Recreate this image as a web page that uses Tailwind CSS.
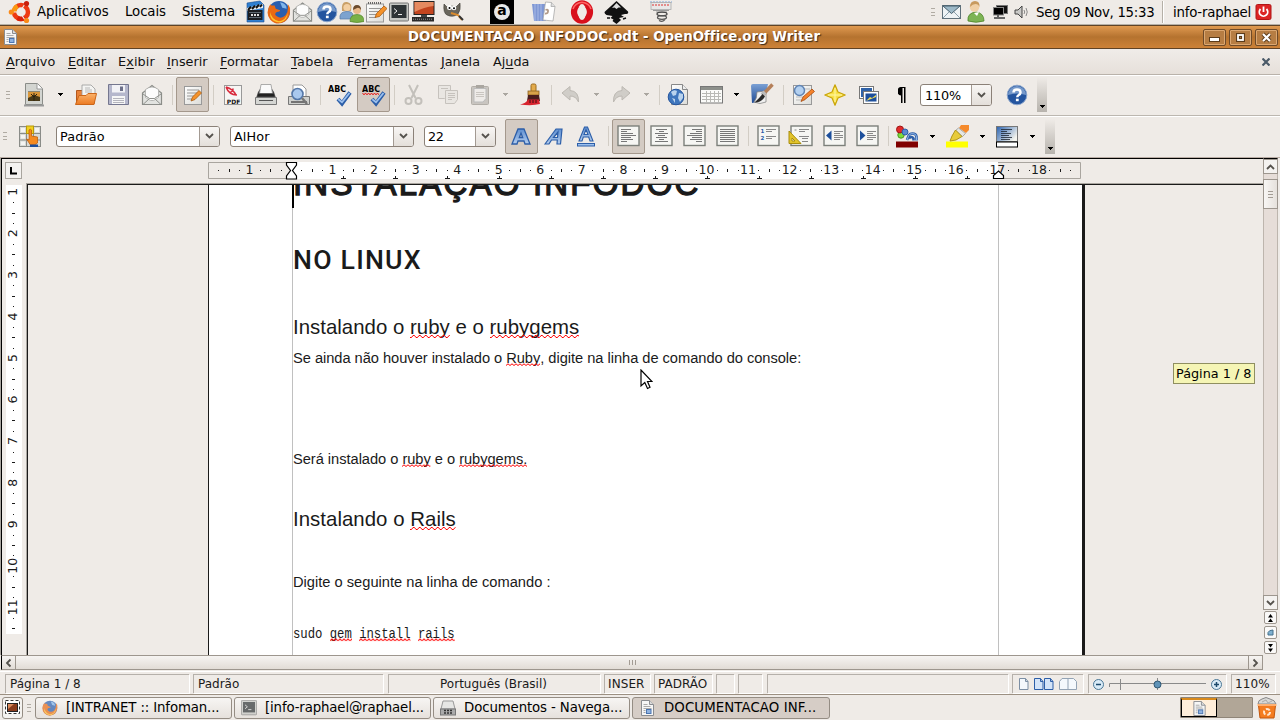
<!DOCTYPE html>
<html lang="pt-BR">
<head>
<meta charset="utf-8">
<title>DOCUMENTACAO INFODOC.odt - OpenOffice.org Writer</title>
<script src="https://cdn.jsdelivr.net/npm/@tailwindcss/browser@4"></script>
</head>
<body class="w-[1280px] h-[720px] overflow-hidden bg-[#efebe7] text-[#1a1a1a] font-['DejaVu_Sans',sans-serif] text-[13px]">

<!-- shared symbols -->
<svg width="0" height="0" class="absolute">
  <defs>
    <pattern id="wave" width="6" height="3" patternUnits="userSpaceOnUse"><path d="M0 2.5H1.5L3 .5H4.5L6 2.5" fill="none" stroke="#f00" stroke-width="1"/></pattern>
    <pattern id="wave2" width="4" height="3" patternUnits="userSpaceOnUse"><path d="M0 2.5L2 .8L4 2.5" fill="none" stroke="#f00" stroke-width="1"/></pattern>
    <linearGradient id="blue" x1="0" y1="0" x2="0" y2="1"><stop offset="0" stop-color="#7aa0d4"/><stop offset="1" stop-color="#1f4a94"/></linearGradient>
    <linearGradient id="paper" x1="0" y1="0" x2="1" y2="1"><stop offset="0" stop-color="#fff"/><stop offset="1" stop-color="#dcdcd8"/></linearGradient>
    <linearGradient id="lb" x1="0" y1="0" x2="0" y2="1"><stop offset="0" stop-color="#5f8fd0"/><stop offset="1" stop-color="#b4cdee"/></linearGradient>
    <linearGradient id="bgfade" x1="0" y1="0" x2="1" y2=".6"><stop offset="0" stop-color="#2a62b0"/><stop offset="1" stop-color="#f4f4ee"/></linearGradient>
    <linearGradient id="fold" x1="0" y1="0" x2="0" y2="1"><stop offset="0" stop-color="#fbb36b"/><stop offset="1" stop-color="#ec7a22"/></linearGradient>
    <symbol id="i-down" viewBox="0 0 5 3"><path d="M0 0H5V1H4V2H3V3H2V2H1V1H0Z" fill="currentColor"/></symbol>
    <symbol id="i-chev" viewBox="0 0 9 6"><path d="M1 1L4.500 4.500L8 1" fill="none" stroke="#55524d" stroke-width="1.800"/></symbol>
    <symbol id="i-mail" viewBox="0 0 22 22"><path d="M1.500 9L11 1.500L20.500 9V20.500H1.500Z" fill="#e2e3e0" stroke="#8b8d89" stroke-width="1.200"/><path d="M4.500 5.500Q11 .5 17.500 5.500v8l-5 3h-3l-5-3z" fill="#fcfcfc" stroke="#a9aaa7" stroke-width=".8"/><path d="M2 20.500L8.500 14.500h5L20 20.500M2 10l6.500 4.500M20 10l-6.500 4.500" fill="none" stroke="#8f918d"/></symbol>
    <symbol id="i-help" viewBox="0 0 22 22"><circle cx="11" cy="11" r="9.800" fill="#24559f" stroke="#8aa5cc"/><path d="M2 11a9 9 0 0 1 18 0Q11 8 2 11" fill="#7699ca"/><path d="M7.500 8.500Q7.500 5.500 11 5.500T14.500 8.500Q14.500 10 12.700 11 11.300 11.800 11.300 13.300" fill="none" stroke="#fff" stroke-width="2.500"/><rect x="9.900" y="14.700" width="2.800" height="2.500" fill="#fff"/></symbol>
    <symbol id="i-note" viewBox="0 0 22 22"><rect x="1.500" y="2.500" width="17" height="18" fill="url(#paper)" stroke="#999"/><path d="M4 7h12M4 10h11M4 13h8M4 16h7" stroke="#999"/><path d="M3 1.500h14" stroke="#666" stroke-width="2" stroke-dasharray="1 1"/><path d="M10 16l1.500-4L19 4.500l3 2.500-7.500 8z" fill="#f5922a" stroke="#a85a10" stroke-width=".8"/></symbol>
    <symbol id="i-term" viewBox="0 0 20 20"><rect x=".5" y=".5" width="19" height="18" rx="1" fill="#c6c8c4" stroke="#777"/><rect x="2.500" y="2.500" width="15" height="13" fill="#2e3436"/><path d="M5 6l3 2.500L5 11M9 12h4" fill="none" stroke="#eee"/></symbol>
    <symbol id="i-odt" viewBox="0 0 13 16"><path d="M.5.500H8.500L12.500 4.500V15.500H.5Z" fill="#f6f6f6" stroke="#8a8c90"/><path d="M8.500.500V4.500H12.500" fill="#ddd" stroke="#8a8c90"/><path d="M2.500 4.500h4M2.500 6.500h7M2.500 8.500h8M2.500 10.500h2M2.500 12.500h2" stroke="#aaa"/><rect x="5.500" y="9.500" width="4.500" height="4" fill="#8fb2e0" stroke="#4a74b0"/></symbol>
    <symbol id="i-fox" viewBox="0 0 22 22"><circle cx="11" cy="11" r="10" fill="#2a5eae"/><path d="M12 2q6 1 6 6l-4-1z" fill="#7fb4ea"/><path d="M3 4Q-2 12 3 18Q9 24 16 20Q22 16 21 7Q20 5 19 4Q20 10 17 14Q13 18 9 15Q6 13 9 11Q12 11 12 9.500L8 8L7 5L4 5Z" fill="#ea6a14"/><path d="M3 11Q4 18 11 19.500Q17 19 19 12Q19 18 13 20.500Q5 21 3 15Z" fill="#ffc52e"/></symbol>
    <symbol id="i-fmt" viewBox="0 0 23 22"><rect x="1" y="1" width="21" height="19.500" fill="#f6f6f3" stroke="#7d807b" stroke-width="1.400"/></symbol>
  </defs>
</svg>

<!-- desktop panel -->
<header class="flex items-center h-[25px] bg-[#efebe7] border-b border-[#b5b0a7] text-[13.33px] text-black *:shrink-0">
  <svg class="ml-2 w-6 h-6" viewBox="0 0 24 24"><circle cx="13" cy="12" r="7" fill="none" stroke="#ee3a12" stroke-width="4.500"/><path d="M6 12A7 7 0 0 1 9.500 6" fill="none" stroke="#fa9a10" stroke-width="4.500"/><path d="M9.500 18A7 7 0 0 0 17 17.500" fill="none" stroke="#d8210a" stroke-width="4.500"/><path d="M4 12h5M17 4l-3 4.500M17 20l-3-4.500" stroke="#efebe7" stroke-width="1.200"/><circle cx="3.300" cy="12" r="2.600" fill="#fa8a18"/><circle cx="18.500" cy="3.500" r="2.600" fill="#c9200c"/><circle cx="18.500" cy="20.500" r="2.600" fill="#f98b18"/></svg>
  <span class="ml-[5px] w-[88px] h-5 leading-5 -mt-px tracking-[-0.08px]">Aplicativos</span>
  <span class="w-[57px] h-5 leading-5 -mt-px tracking-[-0.1px]">Locais</span>
  <span class="w-[64px] h-5 leading-5 -mt-px tracking-[-0.1px]">Sistema</span>
  <svg class="w-5 h-6" viewBox="0 0 20 24"><path d="M1 3L14 1L18 5V22H1Z" fill="#2f7fd0" stroke="#1d4f90" stroke-width=".6"/><path d="M1 8L17 4V8L1 11Z" fill="#eee"/><path d="M2 10l3-3.200M6 9l3-3.200M10 8l3-3.200M14 7l2-2.500" stroke="#111" stroke-width="2"/><rect x="1.500" y="10" width="15" height="10" fill="#1b1d22"/><path d="M3 12.500h12M3 17.500h12" stroke="#5d6770"/><path d="M5 15h8" stroke="#ddd" stroke-width="2" stroke-dasharray="2 1"/></svg>
  <svg class="ml-[1px] w-6 h-6"><use href="#i-fox"/></svg>
  <svg class="ml-[1px] w-[21px] h-[22px]"><use href="#i-mail"/></svg>
  <svg class="ml-[3px] w-[22px] h-[22px]"><use href="#i-help"/></svg>
  <svg class="ml-[1px] w-[25px] h-6" viewBox="0 0 25 24"><path d="M1 19q-1-7 6-7.500t7 4V19z" fill="#7da3cf" stroke="#5679a3" stroke-width=".7"/><path d="M3 11Q2 1 8 2Q14 3 12 11Z" fill="#c9a068"/><circle cx="8" cy="7.500" r="3.600" fill="#f3cfa2"/><circle cx="18" cy="10" r="4" fill="#e8b98a"/><path d="M14 10q0-5 4-5t4 5q-2-3-4-2t-4 2" fill="#6b4a2c"/><path d="M11 21.500q0-7 7-7t7 7q-7 2-14 0" fill="#79b147" stroke="#4e8424" stroke-width=".7"/></svg>
  <svg class="ml-[1px] w-[22px] h-[23px]"><use href="#i-note"/></svg>
  <svg class="ml-[2px] w-5 h-[21px]"><use href="#i-term"/></svg>
  <svg class="ml-[2px] w-6 h-6" viewBox="0 0 24 24"><rect x="3" y="1.500" width="20" height="13" fill="#c4451f" stroke="#222"/><path d="M3.500 2h19v4q-9 1-19 6z" fill="#e58a60"/><rect x="10" y="15" width="6" height="2" fill="#444"/><rect x="1" y="17" width="22" height="4.500" fill="#2a2a2a"/><path d="M2 19.200h20" stroke="#999" stroke-dasharray="1 1"/></svg>
  <svg class="ml-[7px] w-[22px] h-[22px]" viewBox="0 0 22 22"><path d="M2 3l3 3q5-2 9 0l4-4q1 7-2 11-5 4-11 1-4-2-3-11" fill="#6a665c" stroke="#3b3933" stroke-width=".6"/><circle cx="7.500" cy="6.500" r="2.500" fill="#fff"/><circle cx="12" cy="7" r="2.300" fill="#fff"/><circle cx="7.500" cy="7" r="1"/><circle cx="12" cy="7.300" r="1"/><path d="M9 12l7 2 4 5" fill="none" stroke="#d98a2c" stroke-width="2"/><path d="M17 15l4 4" stroke="#333" stroke-width="2"/></svg>
  <div class="ml-[26px] size-6 bg-black grid place-items-center"><div class="size-4 rounded-full bg-[#e8e8e8] text-black font-bold text-[14px] leading-[12px] text-center">a</div></div>
  <svg class="ml-[18px] w-6 h-[22px]" viewBox="0 0 24 22"><path d="M0 3h14v17H2z" fill="#7f97d4"/><path d="M3 3v17M6 3v17M9 3v17" stroke="#a9bae6"/><path d="M13.500 1l6 .5 3.500 4-2 14.500-10-1z" fill="#fff" stroke="#aaa" stroke-width=".8"/><path d="M19.500 1.500l-.5 4 4 0" fill="#ddd" stroke="#aaa" stroke-width=".8"/><path d="M13.500 9q3-1 2.500 1.500t-3 2" fill="none" stroke="#b29a88" stroke-width="1.800"/></svg>
  <svg class="ml-[14px] w-[24px] h-[24px]" viewBox="0 0 24 24"><ellipse cx="12" cy="12" rx="8" ry="8.700" fill="none" stroke="#d8101c" stroke-width="6.200"/><path d="M3 9q2-6 9-6.800 7 .8 9 6.800" fill="none" stroke="#ff6464" stroke-width="1.500"/><ellipse cx="12" cy="12" rx="4" ry="8" fill="#efebe7"/></svg>
  <svg class="ml-[10px] w-[25px] h-[23px]" viewBox="0 0 25 23"><path d="M12.500 0L24 10.500Q25 13 21 13L17 14l3 2-5 1 2 2-4.500 4-4-3 1-1.500-3-1.500 2-2-6-1Q-.5 12 1 10.500Z" fill="#111"/><path d="M12.500 2l4.500 4.500-2.500 0-2 1.500-2-1.500-2.500.5z" fill="#ddd"/><path d="M3 17l3 0M19 18l3-1" stroke="#111" stroke-width="1.500"/></svg>
  <svg class="ml-[20px] w-[24px] h-[24px]" viewBox="0 0 24 24"><path d="M1 2h22" stroke="#7aa7e0" stroke-dasharray="2 1"/><rect x="2" y="2.500" width="20" height="7" fill="#e8e8e8" stroke="#aaa" stroke-width=".8"/><path d="M3 5h18" stroke="#d33" stroke-dasharray="2 1"/><path d="M4 10.500h16M7 12h11" stroke="#999"/><ellipse cx="13" cy="14" rx="5" ry="1.800" fill="none" stroke="#444" stroke-width="1.300"/><ellipse cx="13" cy="17.500" rx="4.500" ry="1.800" fill="none" stroke="#555" stroke-width="1.300"/><path d="M10 20.500q4 2 6-1" fill="none" stroke="#555" stroke-width="1.300"/></svg>
  <div class="ml-[258px] w-1 h-2 border-y border-[#b0aba3] grid place-items-center"><i class="block w-1 h-px bg-[#b0aba3]"></i></div>
  <svg class="ml-[7px] w-[19px] h-[14px]" viewBox="0 0 19 14"><rect x=".5" y=".5" width="18" height="13" fill="#eef3f5" stroke="#5f707a"/><path d="M1 1H18L9.500 8.500Z" fill="#9db9c8" stroke="#48606e"/><path d="M1 13L7 7M18 13L12 7" stroke="#8ba0ac"/></svg>
  <svg class="ml-[6px] w-[18px] h-[22px]" viewBox="0 0 18 22"><path d="M1 20q-1-8 8-9 8 1 8 9-8 2.500-16 0" fill="#7db455" stroke="#4d8429" stroke-width=".8"/><circle cx="7.500" cy="6" r="4.800" fill="#f0d0a6"/><path d="M3 6q0-6 5-6t4.500 6q-1-3-4-3T3 6" fill="#c79a5e"/><path d="M7 12l3 3 2-4" fill="#fff"/></svg>
  <svg class="ml-[8px] w-[15px] h-4" viewBox="0 0 15 16"><rect x="3.500" y="1.500" width="11" height="8" fill="#111" stroke="#777"/><rect x=".5" y="3.500" width="10" height="7.500" fill="#000" stroke="#888"/><path d="M5 11v2M1 14h11" stroke="#666" stroke-width="2"/></svg>
  <svg class="ml-[6px] w-[14px] h-[14px]" viewBox="0 0 14 14"><path d="M1 5h3l4-4v12L4 9H1z" fill="#c9c9c7" stroke="#444"/><path d="M10 5q1.500 2 0 4M12 3q2.500 4 0 8" fill="none" stroke="#888"/></svg>
  <span class="ml-[8px] w-[126px] pt-px tracking-[-0.3px]">Seg 09 Nov, 15:33</span>
  <i class="w-[2px] h-[22px] border-l border-[#b5b0a7] bg-white"></i>
  <span class="ml-[9px] w-[82px] pt-px tracking-[-0.22px]">info-raphael</span>
  <svg class="w-[17px] h-4" viewBox="0 0 17 16"><rect x="1" y=".5" width="15" height="15" rx="1.500" fill="#dc2424" stroke="#b01515"/><path d="M5.500 5a4.200 4.200 0 1 0 6 0" fill="none" stroke="#fff" stroke-width="1.800"/><path d="M8.500 2.500v5.500" stroke="#fff" stroke-width="1.800"/></svg>
</header>

<!-- title bar -->
<div class="flex items-center h-6 border-t border-b border-[#5f4326] bg-linear-to-b from-[#e09a50] via-[#b5732f] to-[#cd8238] *:shrink-0">
  <svg class="ml-1 w-[13px] h-4"><use href="#i-odt"/></svg>
  <h1 class="ml-[391px] w-[412px] h-5 leading-5 font-bold text-[13.33px] tracking-[0.02px] text-white whitespace-nowrap [text-shadow:1px_1px_1px_#3a2a1a]">DOCUMENTACAO INFODOC.odt - OpenOffice.org Writer</h1>
  <div class="ml-[383px] flex gap-[3px]">
    <div class="w-[23px] h-[17px] rounded-[2px] border border-[#6e4a28] bg-[#b67d43] shadow-[inset_0_0_0_1px_#dba771] grid place-items-center"><svg width="11" height="5" class="mt-1"><rect x=".5" y=".5" width="10" height="4" fill="#fff" stroke="#5c3c1a"/></svg></div>
    <div class="w-[23px] h-[17px] rounded-[2px] border border-[#6e4a28] bg-[#b67d43] shadow-[inset_0_0_0_1px_#dba771] grid place-items-center"><svg width="9" height="9"><rect x="2" y="2" width="5" height="5" fill="none" stroke="#5c3c1a" stroke-width="4"/><rect x="2" y="2" width="5" height="5" fill="none" stroke="#fff" stroke-width="1.800"/></svg></div>
    <div class="w-[23px] h-[17px] rounded-[2px] border border-[#6e4a28] bg-[#b67d43] shadow-[inset_0_0_0_1px_#dba771] grid place-items-center"><svg width="11" height="11"><path d="M2 2l7 7M9 2l-7 7" stroke="#5c3c1a" stroke-width="4"/><path d="M2 2l7 7M9 2l-7 7" stroke="#fff" stroke-width="2.200"/></svg></div>
  </div>
</div>

<!-- menu bar -->
<nav class="flex items-center h-[26px] bg-linear-to-b from-[#f0ece9] to-[#e6e0da] border-b border-[#b9b2aa] text-[12.8px] text-[#111] [&_u]:underline-offset-2 *:shrink-0">
  <span class="ml-[6px] w-[62px] tracking-[0.05px]"><u>A</u>rquivo</span>
  <span class="w-[50px]"><u>E</u>ditar</span>
  <span class="w-[49px] tracking-[0.1px]">E<u>x</u>ibir</span>
  <span class="w-[53px]"><u>I</u>nserir</span>
  <span class="w-[71px] tracking-[0.05px]"><u>F</u>ormatar</span>
  <span class="w-[56px] tracking-[0.3px]"><u>T</u>abela</span>
  <span class="w-[94px]">Fe<u>r</u>ramentas</span>
  <span class="w-[52px]"><u>J</u>anela</span>
  <span class="w-[38px]">Aj<u>u</u>da</span>
  <svg class="ml-[731px] w-2 h-2" viewBox="0 0 8 8"><path d="M.5.500L7.500 7.500M7.500.500L.5 7.500" stroke="#4b5a68" stroke-width="2.200"/></svg>
</nav>

<!-- standard toolbar -->
<div class="flex items-center h-[41px] pb-[2px] border-t border-t-white border-b border-b-[#bcb7b0] text-black *:shrink-0">
  <div class="ml-[6px] mr-2 w-1 h-2 border-y border-[#b0aba3] grid place-items-center"><i class="block w-1 h-px bg-[#b0aba3]"></i></div>
  <div class="w-[33px] pr-px grid place-items-center"><svg class="w-[22px] h-6" viewBox="0 0 22 24"><path d="M2.500.500H14.500L19.500 5.500V21.500H2.500Z" fill="#d3d5d1" stroke="#8a8c88"/><path d="M14 .500V6H19.500" fill="#fff" stroke="#999"/><rect x="5" y="8.500" width="12" height="9.500" fill="#4a3a18"/><path d="M5 9h12v5l-6-2-6 3z" fill="#d9963a"/><path d="M11 10v8M8 11l3 3 3-3" stroke="#2a2210" fill="none"/><path d="M1 22.500h20" stroke="#999" stroke-width="2"/></svg></div>
  <div class="w-[18px] grid place-items-center"><svg class="w-[5px] h-[3px]"><use href="#i-down"/></svg></div>
  <div class="w-[33px] grid place-items-center"><svg class="w-6 h-[22px]" viewBox="0 0 24 22"><path d="M2.500 20V6.500H9L11 8.500H20V20Z" fill="#e8823a" stroke="#b4581c"/><path d="M8 1h9l4 4v7H8z" fill="#f4f4f2" stroke="#999" stroke-width=".8"/><path d="M11 4h5M11 6h7M11 8h7" stroke="#aaa" stroke-width=".8"/><path d="M1.500 20.500L5 11.500H12L14 9.500H22.500L20 20.500Z" fill="url(#fold)" stroke="#cc6619"/></svg></div>
  <div class="w-[33px] grid place-items-center"><svg class="w-[23px] h-[23px]" viewBox="0 0 23 23"><path d="M1.500 1.500H21.500V21.500H1.500Z" fill="#b5b7cc" stroke="#75778f"/><rect x="5" y="2" width="13" height="7.500" fill="#f2f2f6"/><rect x="13" y="3.500" width="3" height="4.500" fill="#6d7089"/><rect x="5" y="13" width="13" height="8" fill="#f6f6f6"/><path d="M6 15.500h11M6 17.500h11M6 19.500h11" stroke="#b5b5bd"/></svg></div>
  <div class="w-[33px] grid place-items-center"><svg class="w-[22px] h-[22px]"><use href="#i-mail"/></svg></div>
  <div class="w-2 grid place-items-center"><i class="block w-px h-5 bg-[#d2cdc5]"></i></div>
  <div class="w-[33px] h-[35px] rounded-[2px] border border-[#a4988c] bg-[#d4cbc3] grid place-items-center"><svg class="w-[22px] h-[22px]" viewBox="0 0 22 22"><rect x="2.500" y="2.500" width="17" height="18" fill="url(#paper)" stroke="#999"/><path d="M5 6h12M5 9h10M5 12h7M5 15h5" stroke="#999"/><path d="M9 17l1.500-4L17 6.500l2.500 2.500-6.500 6.500z" fill="#f5922a" stroke="#a85a10" stroke-width=".8"/></svg></div>
  <div class="w-2 grid place-items-center"><i class="block w-px h-5 bg-[#d2cdc5]"></i></div>
  <div class="w-[33px] pr-px grid place-items-center"><svg class="w-5 h-[22px]" viewBox="0 0 20 22"><rect x="1.500" y="1.500" width="17" height="19" fill="#f6f6f4" stroke="#999"/><path d="M3 3q3 8 11 8M3 3q7 2 10 8M10 4.500q0 3-3 4" fill="none" stroke="#d92a3c" stroke-width="1.600"/><text x="10.500" y="19.500" font-size="6" font-weight="bold" text-anchor="middle" fill="#111">PDF</text></svg></div>
  <div class="w-[33px] pr-px grid place-items-center"><svg class="w-[22px] h-[22px]" viewBox="0 0 22 22"><path d="M3 8l2-3h12l2 3 2 6H1z" fill="#4a4a4a"/><path d="M6 .5h10l1.500 9H4.500z" fill="#fafafa" stroke="#999" stroke-width=".8"/><path d="M3.500 9.500h15l1 3h-17z" fill="#222"/><path d="M.5 13.500H21.500V20.500H.5Z" fill="#d5d6d3" stroke="#777"/><path d="M4 16.500h14" stroke="#555"/></svg></div>
  <div class="w-[33px] pr-px grid place-items-center"><svg class="w-[22px] h-[22px]" viewBox="0 0 22 22"><path d="M5 1h9l4 4v8H5z" fill="#fff" stroke="#999"/><path d="M.5 12.500H21.500V20.500H.5Z" fill="#cfd0cd" stroke="#777"/><path d="M3 18h16" stroke="#555" stroke-width="1.500"/><circle cx="9.500" cy="10" r="5.500" fill="#a9c8ee" stroke="#5477a8" stroke-width="1.600"/><path d="M14 14l5 6" stroke="#777" stroke-width="2.500"/></svg></div>
  <div class="w-2 grid place-items-center"><i class="block w-px h-5 bg-[#d2cdc5]"></i></div>
  <div class="w-[33px] pr-px grid place-items-center"><svg class="w-6 h-6" viewBox="0 0 24 24"><text x="0" y="8.500" font-size="8" font-weight="bold" textLength="18" lengthAdjust="spacingAndGlyphs">ABC</text><path d="M10 16l4 4.500L22 9.500" fill="none" stroke="#2c5ea8" stroke-width="4"/><path d="M10.300 16.300l3.700 3L21.500 10" fill="none" stroke="#9cc0ee" stroke-width="1.800"/></svg></div>
  <div class="w-[33px] h-[35px] rounded-[2px] border border-[#a4988c] bg-[#d4cbc3] grid place-items-center"><svg class="w-6 h-6" viewBox="0 0 24 24"><text x="0" y="8.500" font-size="8" font-weight="bold" textLength="18" lengthAdjust="spacingAndGlyphs">ABC</text><path d="M.5 10.500l1.500 1 1.500-1 1.500 1 1.500-1 1.500 1 1.500-1 1.500 1 1.500-1 1.500 1 1.500-1 1.500 1" fill="none" stroke="#e00" stroke-width="1"/><path d="M10 16l4 4.500L22 9.500" fill="none" stroke="#2c5ea8" stroke-width="4"/><path d="M10.300 16.300l3.700 3L21.500 10" fill="none" stroke="#9cc0ee" stroke-width="1.800"/></svg></div>
  <div class="w-2 grid place-items-center"><i class="block w-px h-5 bg-[#d2cdc5]"></i></div>
  <div class="w-[33px] pr-px grid place-items-center"><svg class="w-5 h-[22px]" viewBox="0 0 20 22" stroke="#c3c0bb" fill="none"><path d="M5 1l6.500 13M14 1L7.500 14" stroke-width="2"/><circle cx="4.500" cy="17" r="3" stroke-width="2"/><circle cx="14.500" cy="17" r="3" stroke-width="2"/></svg></div>
  <div class="w-[33px] grid place-items-center"><svg class="w-[22px] h-[21px]" viewBox="0 0 22 21" fill="#e9e6e2" stroke="#c6c2bd"><path d="M1.500 1.500h12v11h-4l-2 2h-6z"/><path d="M8.500 6.500h12v9l-3 4h-9z"/><path d="M4 4.500h7M11 9.500h7M11 11.500h7M11 13.500h7M11 15.500h4"/></svg></div>
  <div class="w-[33px] pr-px grid place-items-center"><svg class="w-5 h-[22px]" viewBox="0 0 20 22"><rect x="1.500" y="2.500" width="17" height="18" rx="1" fill="#c9c5c0" stroke="#b2aea8"/><path d="M4 4.500h12v10l-3 3.500H4z" fill="#eeebe8" stroke="#bbb"/><path d="M6 8.500h8M6 10.500h8M6 12.500h8" stroke="#c9c5c0"/><rect x="6" y="1" width="8" height="3" fill="#aaa6a0"/></svg></div>
  <div class="w-[17px] pr-px grid place-items-center text-[#aaa6a0]"><svg class="w-[5px] h-[3px]"><use href="#i-down"/></svg></div>
  <div class="w-[33px] pr-px grid place-items-center"><svg class="w-[22px] h-[23px]" viewBox="0 0 22 23"><rect x="12" y="1" width="5" height="8" rx="1.500" fill="#e3ab4b" stroke="#9a6a1c"/><rect x="9" y="8" width="11" height="4" fill="#d7a24a" stroke="#8a6020" stroke-width=".8"/><path d="M9 12h11l1 6H8z" fill="#4a1d1d"/><path d="M1 21.500q6-1 8-5l11 0 1 4.500q-8 2-20 .5" fill="#d8232e"/><path d="M11 17v3M14 17v3M17 17v3" stroke="#3a1010"/></svg></div>
  <div class="w-2 grid place-items-center"><i class="block w-px h-5 bg-[#d2cdc5]"></i></div>
  <div class="w-[33px] pr-px grid place-items-center"><svg class="w-5 h-5" viewBox="0 0 20 20"><path d="M1 8l8-6.500V5.500Q18 6 17.500 17Q15 11 9 11v4z" fill="#d0cdc8" stroke="#bcb8b2"/></svg></div>
  <div class="w-[17px] pr-px grid place-items-center text-[#aaa6a0]"><svg class="w-[5px] h-[3px]"><use href="#i-down"/></svg></div>
  <div class="w-[33px] pr-px grid place-items-center"><svg class="w-5 h-5" viewBox="0 0 20 20"><path d="M19 8l-8-6.500V5.500Q2 6 2.500 17Q5 11 11 11v4z" fill="#d0cdc8" stroke="#bcb8b2"/></svg></div>
  <div class="w-[17px] pr-px grid place-items-center text-[#aaa6a0]"><svg class="w-[5px] h-[3px]"><use href="#i-down"/></svg></div>
  <div class="w-2 grid place-items-center"><i class="block w-px h-5 bg-[#d2cdc5]"></i></div>
  <div class="w-[33px] pr-[3px] grid place-items-center"><svg class="w-[22px] h-[23px]" viewBox="0 0 22 23"><path d="M4.500 1.500H15.500L20.500 6.500V21.500H4.500Z" fill="url(#paper)" stroke="#888"/><path d="M15.500 1.500V6.500H20.500" fill="#eee" stroke="#888"/><circle cx="9" cy="14" r="7.800" fill="#3f76bd" stroke="#24559f"/><path d="M4 9q3-3 6-1l-1 4-3 1zM12 10l4 1v4l-3 4-2-4zM5 15l3 1v4z" fill="#b9d3ee"/></svg></div>
  <div class="w-[33px] pr-[3px] grid place-items-center"><svg class="w-[23px] h-[18px]" viewBox="0 0 23 18"><rect x=".5" y=".5" width="22" height="16.500" fill="#fbfbf9" stroke="#777"/><rect x="1" y="1" width="21" height="3" fill="#8d908b"/><path d="M2 7.500h19M2 10.500h19M2 13.500h19M6.500 5v11M10.500 5v11M14.500 5v11M18.500 5v11" stroke="#b9b9b5"/></svg></div>
  <div class="w-[17px] pr-[3px] grid place-items-center"><svg class="w-[5px] h-[3px]"><use href="#i-down"/></svg></div>
  <div class="w-[33px] pr-px grid place-items-center"><svg class="w-6 h-[23px]" viewBox="0 0 24 23"><path d="M1 3Q1 1 3 1H18L15 17L2 20Z" fill="url(#blue)"/><path d="M4 19Q7 16 7 9L16 8V19Q10 22 4 19" fill="#f0f0f0" stroke="#888" stroke-width=".8"/><path d="M22.500 1.500l-9.500 10" stroke="#b5805a" stroke-width="3.500"/><path d="M15 9l-3 3" stroke="#bbb" stroke-width="4"/><path d="M12.500 11q-3 4-8 8.500 7 0 10.500-6z" fill="#2a2a2a"/></svg></div>
  <div class="w-2 grid place-items-center"><i class="block w-px h-5 bg-[#d2cdc5]"></i></div>
  <div class="w-[33px] grid place-items-center"><svg class="w-[23px] h-[22px]" viewBox="0 0 23 22"><rect x="1.500" y="1.500" width="18" height="19" fill="url(#paper)" stroke="#999"/><path d="M4 13h9M4 16h9M13 5h5" stroke="#bbb"/><circle cx="7.500" cy="6.500" r="5" fill="#b3d0f0" stroke="#6084b4" stroke-width="1.500"/><path d="M9 17.500l2-4.500L20 5l2.500 2.500-9.500 8z" fill="#f5822a" stroke="#a84d10" stroke-width=".8"/></svg></div>
  <div class="w-[33px] pr-[3px] grid place-items-center"><svg class="w-[22px] h-[22px]" viewBox="0 0 22 22"><path d="M11 .8L14 8L21.200 11L14 14L11 21.200L8 14L.8 11L8 8Z" fill="#f8e14a" stroke="#c9a40a" stroke-width="1.200" stroke-linejoin="round"/><path d="M11 4v14M4 11h14" stroke="#fff6a8"/></svg></div>
  <div class="w-[33px] pr-px grid place-items-center"><svg class="w-[22px] h-5" viewBox="0 0 22 20"><rect x="1.500" y="1.500" width="14" height="12" fill="#fff" stroke="#777"/><rect x="3" y="3" width="11" height="9" fill="#2f62a8"/><rect x="5.500" y="6.500" width="15" height="12" fill="#fff" stroke="#777"/><rect x="7.500" y="8.500" width="11" height="8" fill="#1d4f9c"/><path d="M8 16l4-4 2 1 4-3v2z" fill="#f2dc57"/></svg></div>
  <div class="w-[33px] pr-px grid place-items-center"><svg class="w-[8px] h-4" viewBox="0 0 8 16"><path d="M7.500 0H3.500A3.500 4 0 0 0 3 8.500V16H4.500V1H6V16H7.500Z"/></svg></div>
  <div class="ml-px w-[72px] h-[22px] flex border border-[#8b8178] rounded-[3px] bg-white text-[12.8px] leading-[21px] overflow-hidden"><span class="pl-1 w-[50px] tracking-[-0.15px]">110%</span><span class="grow border-l border-[#a39a92] bg-linear-to-b from-[#f8f6f4] to-[#e4dfda] grid place-items-center"><svg class="w-[9px] h-[6px]"><use href="#i-chev"/></svg></span></div>
  <svg class="ml-[14px] w-[22px] h-[22px]"><use href="#i-help"/></svg>
  <div class="ml-[9px] w-[10px] h-[35px] bg-linear-to-b from-[#efebe7] to-[#b7b3ad] flex flex-col justify-end items-center pb-1"><svg class="w-[5px] h-[3px]"><use href="#i-down"/></svg></div>
</div>

<!-- formatting toolbar -->
<div class="flex items-center h-[41px] pb-[2px] border-t border-t-white text-black text-[12.8px] *:shrink-0">
  <div class="ml-[3px] mr-[11px] w-1 h-2 border-y border-[#b0aba3] grid place-items-center"><i class="block w-1 h-px bg-[#b0aba3]"></i></div>
  <svg class="w-[24px] h-[23px]" viewBox="0 0 24 23"><rect x="1.500" y="1.500" width="21" height="20" fill="#d8dad6" stroke="#8a8c88"/><path d="M3 3h4v4H3zM17 3h4v4h-4zM3 10h4v3.500H3zM3 16.500h4V20H3zM10 10h4v3.500h-4z" fill="#f4f4f2"/><path d="M8.500 1v21M15.500 1v21M1 8.500h22M1 15h22" stroke="#8a8c88"/><rect x="8.500" y="1" width="7" height="7.500" fill="#f0d020" stroke="#b89a08"/><path d="M11 5q1.500-1.500 2.500 0v6l6 1v6l-3 2h-4l-4-6 2.500 1z" fill="#f58a1f" stroke="#c05f0c" stroke-width=".8"/><rect x="12" y="19.500" width="8" height="2.500" fill="#1d4f9c"/></svg>
  <div class="ml-[14px] w-[164px] h-[21px] flex border border-[#8b8178] rounded-[3px] bg-white leading-5 overflow-hidden"><span class="pl-[3px] w-[142px] tracking-[0.1px]">Padrão</span><span class="grow border-l border-[#a39a92] bg-linear-to-b from-[#f8f6f4] to-[#e4dfda] grid place-items-center"><svg class="w-[9px] h-[6px]"><use href="#i-chev"/></svg></span></div>
  <div class="ml-[10px] w-[184px] h-[21px] flex border border-[#8b8178] rounded-[3px] bg-white leading-5 overflow-hidden"><span class="pl-[3px] w-[162px] tracking-[0.1px]">AlHor</span><span class="grow border-l border-[#a39a92] bg-linear-to-b from-[#f8f6f4] to-[#e4dfda] grid place-items-center"><svg class="w-[9px] h-[6px]"><use href="#i-chev"/></svg></span></div>
  <div class="ml-[10px] w-[72px] h-[21px] flex border border-[#8b8178] rounded-[3px] bg-white leading-5 overflow-hidden"><span class="pl-[3px] w-[50px] tracking-[-0.3px]">22</span><span class="grow border-l border-[#a39a92] bg-linear-to-b from-[#f8f6f4] to-[#e4dfda] grid place-items-center"><svg class="w-[9px] h-[6px]"><use href="#i-chev"/></svg></span></div>
  <div class="ml-[9px] w-[33px] h-[35px] rounded-[2px] border border-[#a4988c] bg-[#d4cbc3] pr-[2px] grid place-items-center"><svg class="w-5 h-[17px]" viewBox="0 0 20 17"><path d="M1 16L7 1h6l6 15h-5l-1-3H7l-1 3z M8.300 9.500h3.400L10 5z" fill="url(#lb)" fill-rule="evenodd" stroke="#2c5ea8" stroke-width="1.300"/></svg></div>
  <div class="w-[33px] pr-[2px] grid place-items-center"><svg class="w-5 h-[17px]" viewBox="0 0 20 17"><path d="M1 16L12 1h6l-1.500 15h-3.500l.3-4H7.500L5 16z M9.500 9.500h4L14 4z" fill="url(#lb)" fill-rule="evenodd" stroke="#2c5ea8" stroke-width="1.200"/></svg></div>
  <div class="w-[33px] pr-[3px] grid place-items-center"><svg class="w-[18px] h-[21px]" viewBox="0 0 18 21"><path d="M2 15L7.500 1h3L16 15h-3l-1.300-4H6.300L5 15z M7 8.500h4L9 3.500z" fill="url(#lb)" fill-rule="evenodd" stroke="#2c5ea8" stroke-width="1.100"/><rect x=".5" y="17.500" width="17" height="2.500" fill="#9cc0ee" stroke="#2c5ea8"/></svg></div>
  <div class="w-2 grid place-items-center"><i class="block w-px h-5 bg-[#d2cdc5]"></i></div>
  <div class="w-[33px] h-[35px] rounded-[2px] border border-[#a4988c] bg-[#d4cbc3] pr-px grid place-items-center"><svg class="w-[23px] h-[22px]" viewBox="0 0 23 22"><use href="#i-fmt"/><path d="M4 4.500h10M4 6.500h6M4 8.500h12M4 10.500h15M4 12.500h10M4 14.500h12M4 16.500h6" stroke="#777"/></svg></div>
  <div class="w-[33px] pr-px grid place-items-center"><svg class="w-[23px] h-[22px]" viewBox="0 0 23 22"><use href="#i-fmt"/><path d="M6 4.500h11M9 6.500h5M5 8.500h13M8 10.500h7M6 12.500h11M9 14.500h5M5 16.500h13" stroke="#777"/></svg></div>
  <div class="w-[33px] pr-px grid place-items-center"><svg class="w-[23px] h-[22px]" viewBox="0 0 23 22"><use href="#i-fmt"/><path d="M9 4.500h10M13 6.500h6M7 8.500h12M4 10.500h15M9 12.500h10M7 14.500h12M13 16.500h6" stroke="#777"/></svg></div>
  <div class="w-[33px] pr-px grid place-items-center"><svg class="w-[23px] h-[22px]" viewBox="0 0 23 22"><use href="#i-fmt"/><path d="M4 4.500h15M4 6.500h15M4 8.500h15M4 10.500h15M4 12.500h15M4 14.500h15M4 16.500h15" stroke="#777"/></svg></div>
  <div class="w-2 grid place-items-center"><i class="block w-px h-5 bg-[#d2cdc5]"></i></div>
  <div class="w-[33px] pr-px grid place-items-center"><svg class="w-[23px] h-[22px]" viewBox="0 0 23 22"><use href="#i-fmt"/><path d="M9 4.500h10M9 6.500h6M9 11.500h10M9 13.500h6" stroke="#888"/><text x="3.500" y="8" font-size="5.500" font-weight="bold" fill="#2c5ea8">1</text><text x="3.500" y="15" font-size="5.500" font-weight="bold" fill="#2c5ea8">2</text></svg></div>
  <div class="w-[33px] pr-[2px] grid place-items-center"><svg class="w-[25px] h-[22px]" viewBox="0 0 25 22"><rect x="3" y="1" width="21" height="19.500" fill="#f6f6f3" stroke="#7d807b" stroke-width="1.400"/><path d="M11 4.500h10M11 6.500h6M11 11.500h10M14 13.500h6M14 16.500h6M6.500 5h2" stroke="#888"/><path d="M1 6V18.500H13Z M4 13v3h3z" fill="#e2c42c" stroke="#a98d0c" fill-rule="evenodd"/></svg></div>
  <div class="w-[33px] pr-px grid place-items-center"><svg class="w-[23px] h-[22px]" viewBox="0 0 23 22"><use href="#i-fmt"/><path d="M11 6.500h9M11 8.500h6M11 10.500h9M11 12.500h9M11 14.500h6" stroke="#888"/><path d="M3 10.500L8.500 5.500V15.500Z" fill="#1d4f9c"/></svg></div>
  <div class="w-[33px] pr-px grid place-items-center"><svg class="w-[23px] h-[22px]" viewBox="0 0 23 22"><use href="#i-fmt"/><path d="M11 6.500h9M11 8.500h6M11 10.500h9M11 12.500h9M11 14.500h6" stroke="#888"/><path d="M9.500 10.500L4 5.500V15.500Z" fill="#1d4f9c"/></svg></div>
  <div class="w-2 grid place-items-center"><i class="block w-px h-5 bg-[#d2cdc5]"></i></div>
  <div class="w-[33px] pr-[3px] grid place-items-center"><svg class="w-[22px] h-[23px]" viewBox="0 0 22 23"><rect y="16.500" width="22" height="6" fill="#800000"/><circle cx="5" cy="10" r="3.200" fill="#7ddc3c" stroke="#4a9a1c"/><circle cx="4" cy="4.500" r="3.500" fill="#e02a2a" stroke="#a01414"/><circle cx="9" cy="7" r="3" fill="#5a8ad0" stroke="#2c5ea8"/><path d="M11 15l1.500-4q1-2.500 4-2.500 3.500 0 4 3v4M13 13.500q2.500-3 4.500 0v2" fill="none" stroke="#2c5ea8" stroke-width="2.600"/><path d="M11 15l1.500-4q1-2.500 4-2.500 3.500 0 4 3v4" fill="none" stroke="#9cc0ee" stroke-width=".9"/></svg></div>
  <div class="w-[17px] pr-[3px] grid place-items-center"><svg class="w-[5px] h-[3px]"><use href="#i-down"/></svg></div>
  <div class="w-[33px] pr-px grid place-items-center"><svg class="w-6 h-[23px]" viewBox="0 0 24 23"><rect y="16.500" width="22" height="6" fill="#ff0"/><path d="M15 0h8v5l-3 3-7-5z" fill="#f58a2c"/><path d="M12.500 3l7 5.500-3 3-7-6z" fill="#e6e6e2" stroke="#999" stroke-width=".8"/><path d="M9.500 5l6.500 6.500-6 3.500-6 1 2-5z" fill="#e7cb3a" stroke="#a98d0c" stroke-width=".9"/></svg></div>
  <div class="w-[17px] pr-[3px] grid place-items-center"><svg class="w-[5px] h-[3px]"><use href="#i-down"/></svg></div>
  <div class="w-[33px] pr-[3px] grid place-items-center"><svg class="w-[22px] h-[23px]" viewBox="0 0 22 23"><rect x=".5" y="1.500" width="21" height="15" fill="url(#bgfade)" stroke="#777"/><path d="M5 4.500h11M5 6.500h6M5 8.500h10M5 10.500h8M5 12.500h11M5 14.500h9" stroke="#1c2430" stroke-width=".8"/><rect x=".5" y="17" width="21" height="5" fill="#fff" stroke="#000"/></svg></div>
  <div class="w-[17px] pr-[3px] grid place-items-center"><svg class="w-[5px] h-[3px]"><use href="#i-down"/></svg></div>
  <div class="ml-[3px] w-[10px] h-[35px] bg-linear-to-b from-[#efebe7] to-[#b7b3ad] flex flex-col justify-end items-center pb-1"><svg class="w-[5px] h-[3px]"><use href="#i-down"/></svg></div>
</div>

<!-- editing window -->
<main class="flex flex-col h-[514px] border-t border-t-[#b9aca4]">
 <div class="flex h-[497px] border-l border-l-[#a9a59f]">
 <div class="flex flex-col w-[1262px] border-l border-t border-black">
  <!-- horizontal ruler -->
  <div class="flex h-[26px] shrink-0 border-b border-[#1a1a1a] ml-[24px]">
    <svg id="hruler" width="1237" height="25" class="-ml-[24px] block overflow-visible shrink-0" viewBox="2 159 1237 25" font-size="12.500" fill="#1a1a1a"></svg>
  </div>
  <div class="flex h-[470px]">
    <svg id="vruler" width="24" height="470" class="shrink-0" viewBox="2 185 24 470" font-size="12.500" fill="#1a1a1a"></svg>
    <div class="w-px bg-[#a9a59f] -mt-[2px]"></div>
    <div class="relative flex grow border-l border-[#1a1a1a] overflow-hidden">
      <div class="w-[180px] shrink-0"></div>
      <article class="flex w-[877px] shrink-0 bg-white border-l border-[#1a1a1a] border-r-[3px] text-[#1a1a1a] font-['Liberation_Sans',sans-serif]">
        <div class="ml-[83px] w-[707px] shrink-0 border-x border-[#c0c0c0] flex flex-col text-[14.67px] leading-5 tracking-[-0.035px] whitespace-nowrap *:shrink-0">
          <p class="-mt-[21px] h-10 leading-10 text-[33px] tracking-[2.200px] [-webkit-text-stroke:1.3px_#1a1a1a]">INSTALAÇÃO INFODOC</p>
          <h2 class="mt-10 h-8 leading-8 text-[26.700px] tracking-[1.200px] font-medium font-['Roboto',sans-serif]">NO LINUX</h2>
          <h3 class="mt-[37px] h-7 leading-7 text-[20.400px] tracking-[0.02px]">Instalando o <span class="relative">ruby<svg class="absolute left-0 bottom-0 w-full h-[3px]"><rect width="100%" height="3" fill="url(#wave)"/></svg></span> e o <span class="relative">rubygems<svg class="absolute left-0 bottom-0 w-full h-[3px]"><rect width="100%" height="3" fill="url(#wave)"/></svg></span></h3>
          <p class="mt-[7px]">Se ainda não houver instalado o <span class="relative">Ruby<svg class="absolute left-0 bottom-0 w-full h-[3px]"><rect width="100%" height="3" fill="url(#wave2)"/></svg></span>, digite na linha de comando do console:</p>
          <p class="mt-[81px]">Será instalado o <span class="relative">ruby<svg class="absolute left-0 bottom-0 w-full h-[3px]"><rect width="100%" height="3" fill="url(#wave2)"/></svg></span> e o <span class="relative">rubygems.<svg class="absolute left-0 bottom-0 w-full h-[3px]"><rect width="100%" height="3" fill="url(#wave2)"/></svg></span></p>
          <h3 class="mt-[36px] h-7 leading-7 text-[20.400px] tracking-[0.04px]">Instalando o <span class="relative">Rails<svg class="absolute left-0 bottom-0 w-full h-[3px]"><rect width="100%" height="3" fill="url(#wave)"/></svg></span></h3>
          <p class="mt-[39px] tracking-normal">Digite o seguinte na linha de comando :</p>
          <p class="mt-[33px] font-['Liberation_Mono',monospace] text-[12.300px] origin-[0_13px] scale-y-[1.15]">sudo <span class="relative">gem<svg class="absolute left-0 bottom-[1px] w-full h-[3px]"><rect width="100%" height="3" fill="url(#wave2)"/></svg></span> <span class="relative">install<svg class="absolute left-0 bottom-[1px] w-full h-[3px]"><rect width="100%" height="3" fill="url(#wave2)"/></svg></span> <span class="relative">rails<svg class="absolute left-0 bottom-[1px] w-full h-[3px]"><rect width="100%" height="3" fill="url(#wave2)"/></svg></span></p>
        </div>
      </article>
      <!-- text caret, pointer and page tooltip lie over the page -->
      <i class="absolute left-[264px] top-0 w-[2px] h-[23px] bg-black"></i>
      <svg class="absolute left-[612px] top-[184px]" width="13" height="21" viewBox="0 0 13 21"><path d="M1 1V17L4.800 13.500L7.500 19.500L10 18.300L7.500 12.500H12Z" fill="#fff" stroke="#000" stroke-width="1.200"/></svg>
      <div class="absolute left-[1145px] top-[178px] w-[82px] h-[21px] border border-[#8f8f60] bg-[#f5f5b5] text-black text-[12.800px] leading-[19px] pl-[2px] whitespace-nowrap">Página 1 / 8</div>
    </div>
  </div>
 </div>
 <!-- vertical scroll bar -->
 <div class="flex flex-col w-[15px] bg-[#e6ddd8] border-x border-[#bdb5ad] border-t border-t-black *:shrink-0">
   <div class="-mx-px h-[15px] border border-[#9d968e] bg-[#f4f2f0] grid place-items-center"><svg class="w-[9px] h-[6px] rotate-180"><use href="#i-chev"/></svg></div>
   <div class="-mx-px mt-[5px] h-[30px] border border-[#9d968e] bg-linear-to-r from-[#f8f6f4] to-[#e6e1dc] grid place-items-center"><div class="w-[5px] h-[7px] border-y border-[#a39c94] grid place-items-center"><i class="block w-[5px] h-px bg-[#a39c94]"></i></div></div>
   <div class="h-[386px]"></div>
   <div class="-mx-px h-[15px] border border-[#9d968e] bg-[#f4f2f0] grid place-items-center"><svg class="w-[9px] h-[6px]"><use href="#i-chev"/></svg></div>
   <div class="-mx-px h-[45px] bg-[#efebe7] flex flex-col items-center gap-[2px] pt-px">
     <div class="w-[13px] h-[13px] border border-[#9d968e] rounded-[2px] bg-[#faf9f8] grid place-items-center"><svg width="5" height="8"><path d="M0 3.500L2.500 0L5 3.500ZM0 8L2.500 4.500L5 8Z"/></svg></div>
     <div class="w-[13px] h-[13px] border border-[#9d968e] rounded-[2px] bg-[#faf9f8] grid place-items-center"><svg width="7" height="7"><path d="M1 6V3.500Q2 1 6 1V6Z" fill="#7fb0d0" stroke="#44708c"/></svg></div>
     <div class="w-[13px] h-[13px] border border-[#9d968e] rounded-[2px] bg-[#faf9f8] grid place-items-center"><svg width="5" height="8"><path d="M0 0H5L2.500 3.500ZM0 4.500H5L2.500 8Z"/></svg></div>
   </div>
 </div>
 </div>
 <!-- horizontal scroll bar -->
 <div class="flex h-[15px] shrink-0 w-[1262px] ml-[1px] border border-[#9d968e] border-l-black bg-linear-to-b from-[#f6f4f2] to-[#e2dcd6]">
   <div class="w-[14px] border-r border-[#9d968e] grid place-items-center"><svg class="w-[9px] h-[6px] rotate-90"><use href="#i-chev"/></svg></div>
   <div class="grow grid place-items-center"><div class="w-[7px] h-[5px] border-x border-[#a39c94] grid place-items-center"><i class="block w-px h-[5px] bg-[#a39c94]"></i></div></div>
   <div class="w-[14px] border-l border-[#9d968e] grid place-items-center"><svg class="w-[9px] h-[6px] -rotate-90"><use href="#i-chev"/></svg></div>
 </div>
</main>

<!-- status bar -->
<div class="flex items-center h-[23px] border-t border-white pl-[5px] text-[12px] leading-[18px] *:shrink-0 *:h-[19px] *:border-l *:border-t *:border-[#b5b0aa] *:shadow-[1px_1px_0_#fff]">
  <span class="w-[184px] pl-1">Página 1 / 8</span>
  <span class="ml-1 w-[190px] pl-1">Padrão</span>
  <span class="ml-[5px] w-[212px] text-center pr-[2px]">Português (Brasil)</span>
  <span class="ml-1 w-[46px] pl-[3px] tracking-[0.1px]">INSER</span>
  <span class="ml-1 w-[58px] pl-[3px]">PADRÃO</span>
  <span class="ml-1 w-[18px]"></span>
  <span class="ml-1 w-6"></span>
  <span class="ml-[5px] w-[241px]"></span>
  <span class="ml-1 w-[71px] flex items-center gap-[5px] pl-[6px]">
    <svg width="10" height="12"><path d="M.5.500H6.500L9 3.500V11.500H.5Z" fill="#f4f8fc" stroke="#7c8fa4"/><path d="M6.500.500V3.500H9" fill="none" stroke="#7c8fa4"/></svg>
    <svg width="20" height="12"><path d="M.5.500H6.500L9 3.500V11.500H.5ZM10.500.500H16.500L19 3.500V11.500H10.500Z" fill="#d4e4f8" stroke="#2c5ea8"/><path d="M6.500.500V3.500H9M16.500.500V3.500H19" fill="none" stroke="#2c5ea8"/></svg>
    <svg width="18" height="12"><path d="M.5 11.500V3.500L3 .500H9V11.500ZM9 .500H14.500L17.500 3.500V11.500H9" fill="#f4f8fc" stroke="#93a3b4"/></svg>
  </span>
  <span class="ml-[5px] w-[138px]"><svg width="136" height="18"><circle cx="9.500" cy="9.500" r="5" fill="#d9ebf7" stroke="#4b7896"/><path d="M7 9.500h5" stroke="#1d4a6c" stroke-width="1.500"/><path d="M20.500 12V8.500H117M31.500 4v11M68.500 3v12" fill="none" stroke="#8a8a8a"/><circle cx="68.500" cy="9.500" r="3.500" fill="#5f93b8" stroke="#2f5672"/><circle cx="127.500" cy="9.500" r="5" fill="#d9ebf7" stroke="#4b7896"/><path d="M125 9.500h5M127.500 7v5" stroke="#1d4a6c" stroke-width="1.500"/></svg></span>
  <span class="ml-[5px] w-[44px] pl-[3px] tracking-[0.1px]">110%</span>
</div>

<!-- task bar -->
<footer class="flex items-center h-[26px] border-t border-[#9c9082] text-[13.33px] text-black *:shrink-0">
  <div class="ml-[2px] w-[21px] h-[22px] rounded-[3px] border border-[#958d84] bg-[#f4f2ef] grid place-items-center"><svg width="15" height="15"><rect x=".5" y=".5" width="14" height="13" fill="#fff" stroke="#333" stroke-dasharray="3 2"/><rect x="2.500" y="3.500" width="10" height="8" fill="#8a3c1c" stroke="#222"/><path d="M3 4h6l-6 5z" fill="#d98a5c"/></svg></div>
  <div class="ml-1 mr-1 w-1 h-2 border-y border-[#b0aba3] grid place-items-center"><i class="block w-1 h-px bg-[#b0aba3]"></i></div>
  <div class="w-[197px] h-[22px] flex items-center rounded-[3px] border border-[#958d84] bg-linear-to-b from-[#f7f5f3] to-[#e6e1dc] pl-[6px]"><svg class="w-4 h-4 opacity-70"><use href="#i-fox"/></svg><span class="ml-2 tracking-[-0.14px]">[INTRANET :: Infoman...</span></div>
  <div class="ml-[2px] w-[197px] h-[22px] flex items-center rounded-[3px] border border-[#958d84] bg-linear-to-b from-[#f7f5f3] to-[#e6e1dc] pl-[6px]"><svg class="w-4 h-4 opacity-70"><use href="#i-term"/></svg><span class="ml-2 tracking-[-0.15px]">[info-raphael@raphael...</span></div>
  <div class="ml-[2px] w-[197px] h-[22px] flex items-center rounded-[3px] border border-[#958d84] bg-linear-to-b from-[#f7f5f3] to-[#e6e1dc] pl-[6px]"><svg width="16" height="16"><path d="M3 1h10l2 8H1z" fill="#e6e6e4" stroke="#999"/><rect x=".5" y="9" width="15" height="6" fill="#aaa" stroke="#777"/><path d="M4 10.500h8M4 13h8" stroke="#333" stroke-width="1.500" stroke-dasharray="2 1"/></svg><span class="ml-2 tracking-[-0.12px]">Documentos - Navega...</span></div>
  <div class="ml-[2px] w-[198px] h-[22px] flex items-center rounded-[3px] border border-[#958d84] bg-[#d6cdc6] pl-[8px]"><svg class="w-[13px] h-4"><use href="#i-odt"/></svg><span class="ml-[10px] tracking-[0.08px]">DOCUMENTACAO INF...</span></div>
  <div class="ml-[350px] flex w-[73px] h-[21px] border border-[#8f8578] rounded-[1px] bg-[#b1a697]"><div class="w-9 h-[19px] border border-black border-t-2 border-t-[#d98a1c] bg-[#ffeeda] grid place-items-center"><svg class="w-[13px] h-[15px]"><use href="#i-odt"/></svg></div></div>
  <svg class="ml-[4px] w-[20px] h-[22px]" viewBox="0 0 20 22"><path d="M1 7q0-4 4-5 4-3 8 0 5 1 6 5z" fill="#d8d8d6" stroke="#888"/><path d="M5 5l4-2 2 3 4-2" fill="none" stroke="#aaa"/><path d="M1.500 8.500H18.500L17 21H3Z" fill="#f47c20" stroke="#c2560c"/><path d="M.5 8h19" stroke="#ffb070" stroke-width="2"/><circle cx="10" cy="15" r="3" fill="none" stroke="#ffe6d0" stroke-width="2" stroke-dasharray="4.300 2"/></svg>
</footer>

<script>
const CM = 41.55;
const parts = (a) => a.join('');
// horizontal ruler
(function () {
  const zero = 291, a = [];
  a.push('<rect x="209" y="162.500" width="871" height="16" fill="#efebe7"/><rect x="292" y="162" width="706" height="17" fill="#fff"/>');
  a.push('<path d="M292 162.500H208.500V178.500H292M998 162.500H1080.500V178.500H998" fill="none" stroke="#a9a59f"/>');
  a.push('<rect x="5.500" y="162.500" width="16" height="16" fill="#f4f2f0" stroke="#a9a59f"/><path d="M11 167v6.500h6" fill="none" stroke="#000" stroke-width="2"/>');
  for (let n = -2; n <= 18; n++) {
    const x = zero + n * CM;
    if (n > -2 && n !== 0) a.push(`<text x="${x}" y="174" text-anchor="middle">${Math.abs(n)}</text>`);
    for (const q of [.25, .5, .75]) {
      const t = Math.round(x + q * CM);
      if (t < 215 || t > 1074) continue;
      a.push(q === .5 ? `<rect x="${t}" y="169" width="1" height="3"/>` : `<rect x="${t}" y="170" width="1" height="1"/>`);
    }
  }
  for (let x = 343; x < 980; x += 52) a.push(`<path d="M${x - 2} 178.500H${x + 3}M${x + .5} 176V179" stroke="#1a1a1a"/>`);
  a.push('<path d="M286.500 162.500h10v2.500l-4 5.500 4 5.500v3h-10v-3l4-5.500-4-5.500z" fill="#fff" stroke="#000" stroke-width="1.200"/>');
  a.push('<path d="M993.500 178.500v-3l5-4.500 5 4.500v3z" fill="#fff" stroke="#000" stroke-width="1.200"/>');
  a.push('<rect x="26" y="183" width="1237" height="1" fill="#a9a59f"/>');
  document.getElementById('hruler').innerHTML = parts(a);
})();
// vertical ruler
(function () {
  const zero = 150.300, a = ['<rect x="6" y="185" width="16" height="449" fill="#fff"/>'];
  for (let n = 1; n <= 11; n++) {
    const y = zero + n * CM;
    a.push(`<text transform="translate(17 ${y}) rotate(-90)" text-anchor="middle">${n}</text>`);
    for (const q of [.25, .5, .75]) {
      const t = Math.round(y + q * CM);
      if (t > 630) continue;
      a.push(q === .5 ? `<rect x="12" y="${t}" width="3" height="1"/>` : `<rect x="13" y="${t}" width="1" height="1"/>`);
    }
  }
  document.getElementById('vruler').innerHTML = parts(a);
})();
</script>
</body>
</html>
